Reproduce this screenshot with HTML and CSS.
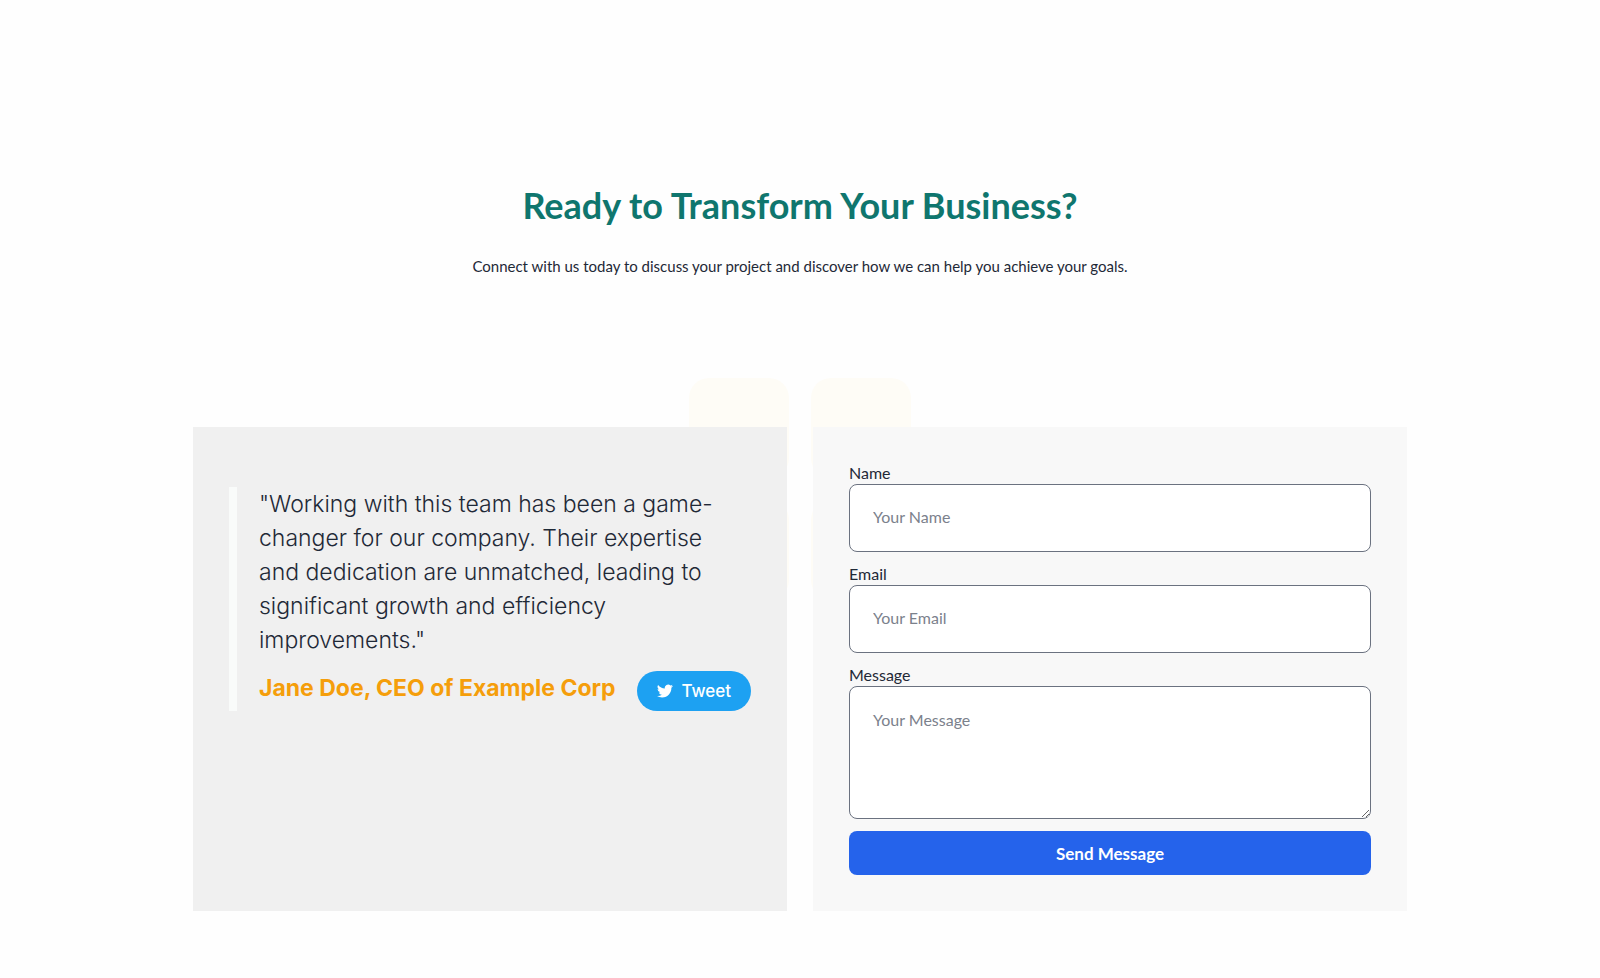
FILE: index.html
```html
<!DOCTYPE html>
<html lang="en">
<head>
    <meta charset="UTF-8">
    <meta name="viewport" content="width=device-width, initial-scale=1.0">
    <title>Contact Us</title>
    <link rel="stylesheet" href="styles.css">
</head>
<body>
    <section class="contact">
        <header class="intro">
            <h2>Ready to Transform Your Business?</h2>
            <p>Connect with us today to discuss your project and discover how we can help you achieve your goals.</p>
        </header>

        <div class="columns">
            <div class="pattern" aria-hidden="true">
                <span></span><span></span><span></span><span></span>
            </div>

            <div class="card testimonial">
                <blockquote>
                    <p>"Working with this team has been a game-changer for our company. Their expertise and dedication are unmatched, leading to significant growth and efficiency improvements."</p>
                    <footer>
                        <cite>Jane Doe, CEO of Example Corp</cite>
                        <button type="button" class="tweet">
                            <svg viewBox="0 0 24 24" width="16" height="16" fill="currentColor" aria-hidden="true">
                                <path d="M23.95 4.57a10 10 0 0 1-2.82.77 4.96 4.96 0 0 0 2.16-2.72c-.95.55-2 .96-3.13 1.18a4.92 4.92 0 0 0-8.38 4.48A13.93 13.93 0 0 1 1.64 3.16a4.92 4.92 0 0 0 1.52 6.57 4.9 4.9 0 0 1-2.23-.61v.06a4.92 4.92 0 0 0 3.95 4.83 5 5 0 0 1-2.21.08 4.94 4.94 0 0 0 4.6 3.42A9.87 9.87 0 0 1 0 19.54a13.99 13.99 0 0 0 7.55 2.21c9.05 0 14-7.5 14-13.99 0-.21 0-.42-.02-.63a9.94 9.94 0 0 0 2.46-2.55z"/>
                            </svg>
                            Tweet
                        </button>
                    </footer>
                </blockquote>
            </div>

            <form class="card contact-form">
                <div class="field">
                    <label for="name">Name</label>
                    <input type="text" id="name" placeholder="Your Name">
                </div>
                <div class="field">
                    <label for="email">Email</label>
                    <input type="email" id="email" placeholder="Your Email">
                </div>
                <div class="field">
                    <label for="message">Message</label>
                    <textarea id="message" rows="4" placeholder="Your Message"></textarea>
                </div>
                <button type="submit" class="send">Send Message</button>
            </form>
        </div>
    </section>
</body>
</html>
```
FILE: styles.css
```css
* {
    box-sizing: border-box;
}
body {
    margin: 0;
    font-family: Lato, sans-serif;
    font-size: 16px;
    color: #1f2937;
    background-color: #fefefe;
}
.contact {
    max-width: 1254px;
    margin: 0 auto;
    padding: 180px 20px 67px;
}
.intro {
    margin-bottom: 148px;
    text-align: center;
}
.intro h2 {
    margin: 0 0 23px;
    font-size: 36px;
    font-weight: 700;
    line-height: 50px;
    color: #0f766e;
}
.intro p {
    margin: 0;
    font-size: 15px;
    line-height: 26px;
}
.columns {
    position: relative;
    display: grid;
    grid-template-columns: repeat(2, minmax(0, 1fr));
    gap: 26px;
}
/* faint squares behind the cards */
.pattern {
    position: absolute;
    top: -49px;
    left: 50%;
    transform: translateX(-50%);
    display: grid;
    grid-template-columns: 100px 100px;
    gap: 22px;
}
.pattern span {
    height: 100px;
    border-radius: 20px;
    background-color: #fefcf6;
}
.card {
    position: relative;
    padding: 36px;
}
.testimonial {
    background-color: #f0f0f0;
}
.testimonial blockquote {
    margin: 24px 0 0;
    padding-left: 22px;
    border-left: 8px solid #f9fbfa;
    font-family: Inter, sans-serif;
}
.testimonial p {
    margin: 0 0 14px;
    padding-right: 12px;
    font-size: 23px;
    font-weight: 300;
    line-height: 34px;
}
.testimonial footer {
    display: flex;
    align-items: flex-start;
    justify-content: space-between;
}
.testimonial cite {
    font-size: 23px;
    font-style: normal;
    font-weight: 700;
    line-height: 34px;
    white-space: nowrap;
    color: #f59e0b;
}
.tweet {
    display: flex;
    align-items: center;
    gap: 8px;
    height: 40px;
    padding: 0 20px;
    border: none;
    border-radius: 20px;
    font-family: Inter, sans-serif;
    font-size: 17px;
    font-weight: 500;
    color: white;
    background-color: #1da1f2;
    cursor: pointer;
}
.contact-form {
    display: flex;
    flex-direction: column;
    gap: 12px;
    background-color: #f8f8f8;
}
.field {
    display: flex;
    flex-direction: column;
    gap: 2px;
}
.field label {
    line-height: 19px;
}
.field input,
.field textarea {
    width: 100%;
    height: 68px;
    padding: 20px 23px 24px;
    border: 1px solid #6b7280;
    border-radius: 8px;
    font-family: inherit;
    font-size: 16px;
    line-height: 22px;
    color: #1f2937;
    background-color: white;
}
.field textarea {
    height: 133px;
    padding: 22px 23px;
    resize: vertical;
}
.field input::placeholder,
.field textarea::placeholder {
    color: #7b818c;
}
.send {
    height: 44px;
    border: none;
    border-radius: 8px;
    font-family: inherit;
    font-size: 17px;
    font-weight: 700;
    color: white;
    background-color: #2563eb;
    cursor: pointer;
}
```
